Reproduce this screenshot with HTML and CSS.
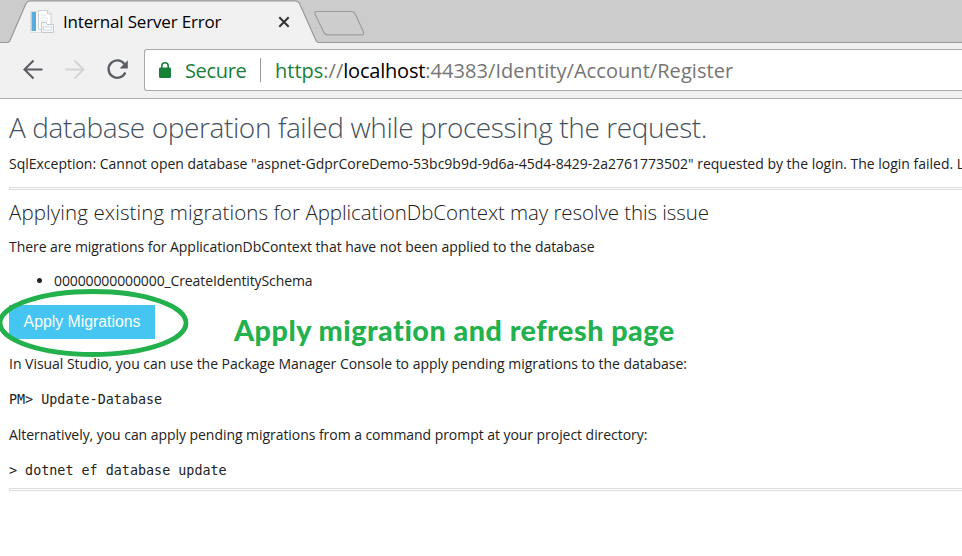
FILE: index.html
```html
<!DOCTYPE html>
<html lang="en">
<head>
<meta charset="utf-8">
<title>Internal Server Error</title>
<link rel="stylesheet" href="styles.css">
</head>
<body>
<header class="browser">
  <div class="tabs">
    <svg class="tab-shapes" width="962" height="43" viewBox="0 0 962 43">
      <path d="M0 42.5H7Q9 42.5 10 40.5L26 3.5Q27.500 .8 30 .8H295Q298 .8 299.500 3.500L316 40.500Q317 42.500 319 42.500H962V44H0Z" fill="#f1f1f1" stroke="#999" stroke-width="1.2"/>
      <path d="M317 11.500H351Q354 11.500 355.200 14L363.500 32Q364.500 34.800 361.500 34.800H328Q325 34.800 323.800 32.300L315 14Q314 11.500 317 11.500Z" fill="#cdcdcd" stroke="#9d9d9d" stroke-width="1.2"/>
    </svg>
    <svg class="favicon" width="24" height="24" viewBox="0 0 24 24">
      <rect x=".5" y="1.500" width="18" height="21" fill="#fafafa" stroke="#e0e0e0"/>
      <rect x="1.500" y="2" width="4.500" height="19" fill="#58ace0"/>
      <path d="M8.500 .5H18L21 3.500V19.500H8.500Z" fill="#fff" stroke="#ccd0d4"/>
      <path d="M17.500 .5V4H21" fill="#eee" stroke="#ccd0d4"/>
      <path d="M10.500 5H16M10.500 8H18M10.500 11H18" stroke="#dfe5ea"/>
      <path d="M11.500 22.500V12.500H16L17 14.500H23.500V22.500Z" fill="#f4f6f9" stroke="#c5cad2"/>
      <rect x="13.500" y="17" width="8" height="3" fill="#fff" stroke="#d4dae3"/>
    </svg>
    <span class="tab-title">Internal Server Error</span>
    <svg class="close" width="12" height="12" viewBox="0 0 12 12"><path d="M1.300 1.300L10.700 10.700M10.700 1.300L1.300 10.700" stroke="#333" stroke-width="2"/></svg>
  </div>
  <div class="toolbar">
    <svg class="nav" width="144" height="55" viewBox="0 43 144 55" fill="none">
      <path d="M42.500 69.500H24.500M33.500 60.500L24.500 69.500L33.500 78.500" stroke="#5a5d63" stroke-width="2.100"/>
      <path d="M65.300 69.500H83.300M74.500 60.500L83.500 69.500L74.500 78.500" stroke="#d3d4d6" stroke-width="2.100"/>
      <path d="M124.600 64.400A8.700 8.700 0 1 0 125.300 72.500" stroke="#5a5d63" stroke-width="2.300"/>
      <path d="M127.800 60.300V68.500H119.600Z" fill="#5a5d63"/>
    </svg>
    <div class="address">
      <svg class="lock" width="12" height="16" viewBox="0 0 12 16"><rect y="5.500" width="12" height="10.500" rx="1.300" fill="#188038"/><path d="M2.800 6.500V4A3.200 3.200 0 0 1 9.200 4V6.500" fill="none" stroke="#188038" stroke-width="1.600"/></svg>
      <span class="secure">Secure</span>
      <i class="divider"></i>
      <span class="url"><span class="scheme">https</span>://<span class="host">localhost</span><span class="path">:44383/Identity/Account/Register</span></span>
    </div>
  </div>
</header>
<main>
  <h1>A database operation failed while processing the request.</h1>
  <p class="exception">SqlException: Cannot open database "aspnet-GdprCoreDemo-53bc9b9d-9d6a-45d4-8429-2a2761773502" requested by the login. The login failed. L</p>
  <hr>
  <h2>Applying existing migrations for <span class="context">ApplicationDbContext may resolve this issue</span></h2>
  <p class="pending">There are migrations for ApplicationDbContext that have not been applied to the database</p>
  <ul><li>00000000000000_CreateIdentitySchema</li></ul>
  <div class="action">
    <button>Apply Migrations</button>
    <svg class="ring" width="192" height="70" viewBox="0 0 192 70"><ellipse cx="93" cy="35" rx="93" ry="31.500" fill="none" stroke="#22b14c" stroke-width="4.800"/></svg>
    <strong class="note">Apply migration and refresh page</strong>
  </div>
  <p class="console">In Visual Studio, you can use the Package Manager Console to apply pending migrations to the database:</p>
  <code>PM&gt; Update-Database</code>
  <p class="prompt">Alternatively, you can apply pending migrations from a command prompt at your project directory:</p>
  <code>&gt; dotnet ef database update</code>
  <hr class="last">
</main>
</body>
</html>
```
FILE: styles.css
```css
* { box-sizing: border-box; }
body { margin: 0; width: 962px; height: 556px; overflow: hidden; background: #fff; color: #222; font-family: "Open Sans", sans-serif; font-size: 14px; white-space: nowrap; }
svg { display: block; flex: none; }
.browser { height: 99px; background: #f1f1f1; border-bottom: 1px solid #adadad; }
.tabs { position: relative; height: 43px; display: flex; align-items: center; padding-left: 30px; background: #ccc; }
.tab-shapes { position: absolute; left: 0; top: 0; }
.favicon { position: relative; margin-top: 1px; }
.tab-title { position: relative; width: 215px; margin-left: 9px; font-size: 17px; letter-spacing: -.18px; color: #000; line-height: 42px; }
.close { position: relative; margin-top: 1px; }
.toolbar { height: 55px; display: flex; }
.address { flex: 1; height: 42px; margin-top: 6px; display: flex; align-items: center; border: 1px solid #aaa; border-right: 0; border-radius: 3px 0 0 3px; background: #fff; font-size: 20px; padding-left: 14px; color: #757575; }
.lock { margin-top: -1px; }
.secure { width: 75px; margin-left: 14px; letter-spacing: -.35px; color: #188038; }
.divider { width: 1px; height: 24px; margin-right: 14px; background: #999; }
.scheme { color: #188038; }
.host { color: #000; letter-spacing: -.2px; }
.path { letter-spacing: .06px; }
main { padding: 0 0 0 9px; }
h1, h2, p, ul { margin: 0; }
h1 { height: 51px; padding-top: 7px; font-size: 28px; line-height: 42px; font-weight: 300; letter-spacing: -.39px; color: #44525e; }
.exception { height: 37px; line-height: 28px; letter-spacing: -.01px; }
hr { height: 3px; margin: 0; border: 1px solid #ddd; border-right: 0; }
h2 { height: 46px; font-size: 20.500px; font-weight: 300; line-height: 44px; letter-spacing: .11px; color: #222; }
.context { letter-spacing: -.08px; }
.pending { height: 34px; line-height: 22px; letter-spacing: -.05px; }
ul { height: 35px; padding-left: 45px; line-height: 22px; letter-spacing: -.11px; }
.action { position: relative; height: 50px; display: flex; align-items: flex-start; }
button { width: 146px; height: 34px; padding: 0; border: 0; background: #44c5f2; color: #fff; font: 15.800px "Liberation Sans", sans-serif; }
.ring { position: absolute; left: -9px; top: -17px; overflow: visible; }
.note { margin-left: 79px; font: 900 28.700px/51px Lato, sans-serif; letter-spacing: .5px; color: #22b14c; }
.console, .prompt { height: 36px; line-height: 18px; letter-spacing: -.025px; }
.prompt { letter-spacing: -.05px; }
code { display: block; height: 35px; font: 13.400px/18px "DejaVu Sans Mono", monospace; }
.last { margin-top: -9px; }
```
